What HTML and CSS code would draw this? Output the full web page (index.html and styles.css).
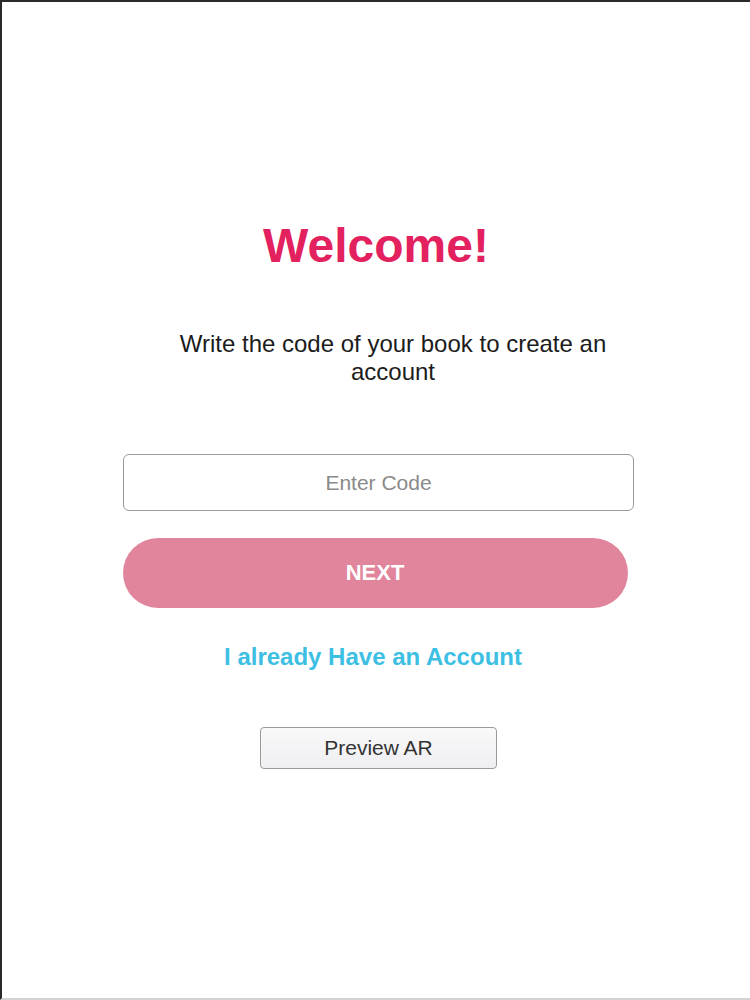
FILE: index.html
```html
<!DOCTYPE html>
<html lang="en">
<head>
  <meta charset="UTF-8">
  <meta name="viewport" content="width=device-width, initial-scale=1.0">
  <title>Welcome</title>
  <link rel="stylesheet" href="styles.css">
</head>
<body>
  <div class="screen">
    <h1 class="title">Welcome!</h1>

    <p class="intro">Write the code of your book to create an account</p>

    <input type="text" class="code-input" id="code" placeholder="Enter Code">

    <button class="next-btn">NEXT</button>

    <a href="#" class="login-link">I already Have an Account</a>

    <button class="preview-btn">Preview AR</button>
  </div>
</body>
</html>
```

FILE: styles.css
```css
* {
  box-sizing: border-box;
}
body {
  margin: 0;
  padding: 0;
  background-color: #ffffff;
  font-family: "Liberation Sans", Arial, sans-serif;
}
.screen {
  width: 750px;
  height: 1000px;
  border-top: 2px solid #2a2a2a;
  border-left: 2px solid #2a2a2a;
  border-bottom: 2px solid #d2d2d2;
  padding-top: 216px;
  display: flex;
  flex-direction: column;
  align-items: center;
}
.title {
  margin: 0;
  font-size: 48px;
  line-height: 56px;
  font-weight: bold;
  color: #e3215f;
}
.intro {
  margin: 56px 0 0;
  padding-left: 34px;
  width: 490px;
  font-size: 24px;
  line-height: 28px;
  text-align: center;
  color: #1c1c1c;
}
.code-input {
  margin-top: 68px;
  margin-left: 5px;
  width: 511px;
  height: 57px;
  border: 1px solid #9a9a9a;
  border-radius: 6px;
  font-family: inherit;
  font-size: 21px;
  text-align: center;
  color: #333;
  outline: none;
}
.code-input::placeholder {
  color: #8a8a8a;
}
.next-btn {
  margin-top: 27px;
  margin-right: 2px;
  width: 505px;
  height: 70px;
  border: none;
  border-radius: 35px;
  background-color: #e0859c;
  color: #ffffff;
  font-family: inherit;
  font-size: 22px;
  font-weight: bold;
  cursor: pointer;
}
.login-link {
  margin-top: 35px;
  margin-right: 6px;
  font-size: 24px;
  line-height: 28px;
  font-weight: bold;
  color: #3dbfe3;
  text-decoration: none;
}
.preview-btn {
  margin-top: 56px;
  margin-left: 5px;
  width: 237px;
  height: 42px;
  border: 1px solid #9a9a9a;
  border-radius: 4px;
  background: linear-gradient(#f9f9fa, #efeff2);
  color: #333;
  font-family: inherit;
  font-size: 21px;
  cursor: pointer;
}
```
